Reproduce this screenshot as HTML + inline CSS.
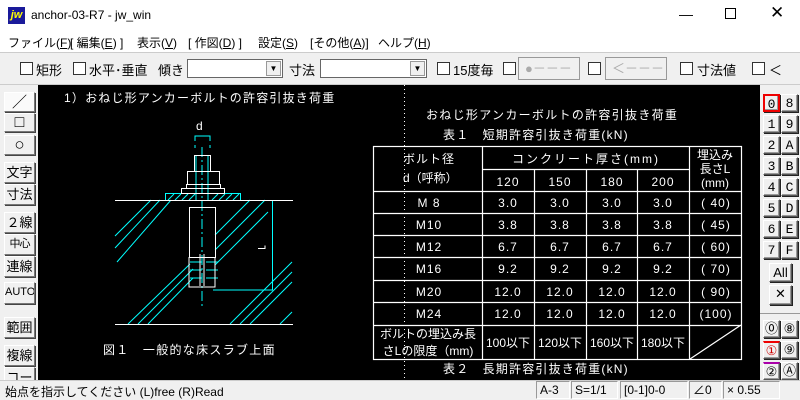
<!DOCTYPE html>
<html><head><meta charset="utf-8"><style>
*{margin:0;padding:0;box-sizing:border-box}
body{width:800px;height:400px;overflow:hidden;background:#f0f0f0;font-family:"Liberation Sans","Noto Sans CJK JP",sans-serif;position:relative;font-size:12px;color:#000}
.a{position:absolute;white-space:nowrap}
.cb{position:absolute;width:13px;height:13px;border:1px solid #333;background:#fff}
.btn{position:absolute;background:#f0f0f0;border:1px solid;border-color:#fff #777 #777 #fff;box-shadow:1px 1px 0 #444;text-align:center;font-size:13px;line-height:19px;overflow:hidden}
.rb{position:absolute;width:17px;height:18px;background:#f0f0f0;border:1px solid;border-color:#fff #555 #555 #fff;box-shadow:inset -1px -1px 0 #999,1px 1px 0 #222;text-align:center;font-size:13px;line-height:17px;font-family:"Liberation Mono",monospace}
.sp{position:absolute;top:381px;height:18px;border:1px solid;border-color:#999 #fff #fff #999;font-size:12px;line-height:16px;padding-left:3px}
</style></head><body>
<div class="a" style="left:0;top:0;width:800px;height:32px;background:#fff"></div>
<div class="a" style="left:8px;top:7px;width:17px;height:17px;background:#1a1a9a;color:#ff0;font-weight:bold;font-style:italic;font-size:11px;line-height:17px;text-align:center">jw</div>
<div class="a" style="left:31px;top:8px;font-size:12px">anchor-03-R7 - jw_win</div>
<div class="a" style="left:679px;top:6px;font-size:14px">—</div>
<div class="a" style="left:725px;top:8px;width:11px;height:11px;border:1.3px solid #000"></div>
<div class="a" style="left:770px;top:3px;font-size:17px">✕</div>
<div class="a" style="left:0;top:32px;width:800px;height:20px;background:#fff"></div>
<div class="a" style="left:8px;top:34px">ファイル(<u>F</u>)</div>
<div class="a" style="left:70px;top:34px">[ 編集(<u>E</u>) ]</div>
<div class="a" style="left:137px;top:34px">表示(<u>V</u>)</div>
<div class="a" style="left:188px;top:34px">[ 作図(<u>D</u>) ]</div>
<div class="a" style="left:258px;top:34px">設定(<u>S</u>)</div>
<div class="a" style="left:310px;top:34px">[その他(<u>A</u>)]</div>
<div class="a" style="left:378px;top:34px">ヘルプ(<u>H</u>)</div>
<div class="a" style="left:0;top:52px;width:800px;height:1px;background:#ccc"></div>
<div class="cb" style="left:20px;top:62px"></div><div class="a" style="left:36px;top:60px;font-size:13px">矩形</div>
<div class="cb" style="left:73px;top:62px"></div><div class="a" style="left:89px;top:60px;font-size:13px">水平･垂直</div>
<div class="a" style="left:158px;top:60px;font-size:13px">傾き</div>
<div class="a" style="left:187px;top:59px;width:96px;height:19px;background:#fff;border:1px solid #666"></div>
<div class="a" style="left:266px;top:61px;width:15px;height:15px;background:#f0f0f0;border:1px solid #999;font-size:8px;text-align:center;line-height:14px">▼</div>
<div class="a" style="left:289px;top:60px;font-size:13px">寸法</div>
<div class="a" style="left:320px;top:59px;width:107px;height:19px;background:#fff;border:1px solid #666"></div>
<div class="a" style="left:410px;top:61px;width:15px;height:15px;background:#f0f0f0;border:1px solid #999;font-size:8px;text-align:center;line-height:14px">▼</div>
<div class="cb" style="left:437px;top:62px"></div><div class="a" style="left:453px;top:60px;font-size:13px">15度毎</div>
<div class="cb" style="left:503px;top:62px"></div>
<div class="a" style="left:518px;top:57px;width:62px;height:23px;border:1px solid #999;color:#aaa;font-size:13px;line-height:21px;padding-left:6px">●－－－</div>
<div class="cb" style="left:588px;top:62px"></div>
<div class="a" style="left:605px;top:57px;width:62px;height:23px;border:1px solid #999;color:#aaa;font-size:13px;line-height:21px;padding-left:6px">＜－－－</div>
<div class="cb" style="left:680px;top:62px"></div><div class="a" style="left:697px;top:60px;font-size:13px">寸法値</div>
<div class="cb" style="left:752px;top:62px"></div><div class="a" style="left:769px;top:60px;font-size:13px">＜</div>
<div class="a" style="left:0;top:84px;width:800px;height:1px;background:#ccc"></div>

<div class="btn" style="left:4px;top:92px;width:31px;height:20px;background:#fafafa;font-size:15px">／</div>
<div class="btn" style="left:4px;top:113px;width:31px;height:19px;font-size:16px;line-height:17px">□</div>
<div class="btn" style="left:4px;top:135px;width:31px;height:20px;font-size:17px;line-height:18px">○</div>
<div class="btn" style="left:4px;top:162px;width:31px;height:21px">文字</div>
<div class="btn" style="left:4px;top:184px;width:31px;height:21px">寸法</div>
<div class="btn" style="left:4px;top:212px;width:31px;height:21px">２線</div>
<div class="btn" style="left:4px;top:234px;width:31px;height:21px;font-size:11px;letter-spacing:-1px">中心線</div>
<div class="btn" style="left:4px;top:256px;width:31px;height:21px">連線</div>
<div class="btn" style="left:4px;top:282px;width:31px;height:22px;font-size:11px">AUTO</div>
<div class="btn" style="left:4px;top:317px;width:31px;height:21px">範囲</div>
<div class="btn" style="left:4px;top:345px;width:31px;height:21px">複線</div>
<div class="btn" style="left:4px;top:367px;width:31px;height:14px">コーナー</div>

<svg class="a" style="left:38px;top:85px" width="722" height="296" viewBox="38 85 722 296">
<rect x="38" y="85" width="722" height="296" fill="#000"/>
<g fill="#fff" font-family="Liberation Sans,Noto Sans CJK JP,sans-serif" font-size="12">
<text x="64" y="102" letter-spacing="1.2">1）おねじ形アンカーボルトの許容引抜き荷重</text>
<text x="196" y="130" font-size="12">d</text>
<text x="103" y="354" letter-spacing="1.3">図１　一般的な床スラブ上面</text>
<text x="426" y="119" letter-spacing="1.3">おねじ形アンカーボルトの許容引抜き荷重</text>
<text x="443" y="139" letter-spacing="1.2">表１　短期許容引抜き荷重(kN)</text>
<text x="443" y="373" letter-spacing="1.2">表２　長期許容引抜き荷重(kN)</text>
</g>
<line x1="404.5" y1="85" x2="404.5" y2="381" stroke="#fff" stroke-dasharray="1,3"/>
<g stroke="#0ff" stroke-width="1" fill="none">
<path d="M195 141v-5h15v5M195 145v3M210 145v3"/>
<path d="M202 147v161" stroke-dasharray="10,3,2,3"/>
<rect x="165.5" y="193.5" width="75" height="7"/>
<path d="M168 200l6-6M175 200l6-6M182 200l6-6M189 200l6-6M212 200l6-6M219 200l6-6M226 200l6-6M233 200l6-6"/>
<path d="M196 155v45M208 155v45"/>
<path d="M272.5 200v90H213" />
<path d="M115 236l36-36M115 248l45-48M117 262l54-62M128 324l62-60M138 324l55-55M148 324l45-46M215 250l50-50M215 235l35-35M215 265l53-53M230 324l62-62M240 324l52-52M250 324l42-42M280 324l12-12"/>
<path d="M190 262h12M190 270h12M190 278h12M206 262h12M206 270h12M206 278h12"/>
</g>
<g stroke="#fff" stroke-width="1" fill="none">
<path d="M115 200.5h178M115 324.5h178"/>
<rect x="194.5" y="155.5" width="16" height="16"/>
<rect x="187.5" y="171.5" width="32" height="13"/>
<rect x="186.5" y="184.5" width="34" height="4"/>
<rect x="181.5" y="188.5" width="43" height="5"/>
<rect x="189.5" y="207.5" width="26" height="50"/>
<path d="M189 257v30h26v-30M200 254v32M204 254v32"/>
<path d="M258 248.5h7v-3"/>
</g>
<g stroke="#fff" stroke-width="1.2" fill="none">
<rect x="373.5" y="146.5" width="368" height="213"/>
<path d="M482.5 146v213M534.5 169v190M586.5 169v190M637.5 169v190M689.5 146v213M482 169.5h207M373 191.5h368M373 213.5h368M373 235.5h368M373 257.5h368M373 280.5h368M373 302.5h368M373 325.5h368M690 359l51-34"/>
</g>
<g fill="#fff" font-family="Liberation Sans,Noto Sans CJK JP,sans-serif" font-size="12" text-anchor="middle">
<text x="403" y="163" text-anchor="start" letter-spacing="1">ボルト径</text>
<text x="403" y="182" text-anchor="start">d（呼称）</text>
<text x="586" y="163" letter-spacing="2">コンクリート厚さ(mm)</text>
<text x="715" y="159">埋込み</text>
<text x="715" y="173">長さL</text>
<text x="715" y="187">(mm)</text>
<g letter-spacing="1">
<text x="508" y="186">120</text><text x="560" y="186">150</text><text x="612" y="186">180</text><text x="663" y="186">200</text>
<text x="429" y="207">M 8</text><text x="429" y="229">M10</text><text x="429" y="251">M12</text><text x="429" y="273">M16</text><text x="429" y="296">M20</text><text x="429" y="318">M24</text>
<text x="508" y="207">3.0</text><text x="560" y="207">3.0</text><text x="612" y="207">3.0</text><text x="663" y="207">3.0</text><text x="716" y="207">( 40)</text>
<text x="508" y="229">3.8</text><text x="560" y="229">3.8</text><text x="612" y="229">3.8</text><text x="663" y="229">3.8</text><text x="716" y="229">( 45)</text>
<text x="508" y="251">6.7</text><text x="560" y="251">6.7</text><text x="612" y="251">6.7</text><text x="663" y="251">6.7</text><text x="716" y="251">( 60)</text>
<text x="508" y="273">9.2</text><text x="560" y="273">9.2</text><text x="612" y="273">9.2</text><text x="663" y="273">9.2</text><text x="716" y="273">( 70)</text>
<text x="508" y="296">12.0</text><text x="560" y="296">12.0</text><text x="612" y="296">12.0</text><text x="663" y="296">12.0</text><text x="716" y="296">( 90)</text>
<text x="508" y="318">12.0</text><text x="560" y="318">12.0</text><text x="612" y="318">12.0</text><text x="663" y="318">12.0</text><text x="716" y="318">(100)</text>
</g>
<text x="428" y="338">ボルトの埋込み長</text>
<text x="428" y="355">さLの限度（mm)</text>
<text x="508" y="347">100以下</text><text x="560" y="347">120以下</text><text x="612" y="347">160以下</text><text x="663" y="347">180以下</text>
</g>
</svg>

<div class="rb" style="left:763px;top:94px;border:2px solid #e00">0</div><div class="rb" style="left:781px;top:94px">8</div>
<div class="rb" style="left:763px;top:115px">1</div><div class="rb" style="left:781px;top:115px">9</div>
<div class="rb" style="left:763px;top:136px">2</div><div class="rb" style="left:781px;top:136px">A</div>
<div class="rb" style="left:763px;top:157px">3</div><div class="rb" style="left:781px;top:157px">B</div>
<div class="rb" style="left:763px;top:178px">4</div><div class="rb" style="left:781px;top:178px">C</div>
<div class="rb" style="left:763px;top:199px">5</div><div class="rb" style="left:781px;top:199px">D</div>
<div class="rb" style="left:763px;top:220px">6</div><div class="rb" style="left:781px;top:220px">E</div>
<div class="rb" style="left:763px;top:241px">7</div><div class="rb" style="left:781px;top:241px">F</div>
<div class="rb" style="left:769px;top:263px;width:23px;height:19px;font-family:'Liberation Sans',sans-serif">All</div>
<div class="rb" style="left:769px;top:285px;width:23px;height:20px;font-size:16px">✕</div>
<div class="a" style="left:760px;top:313px;width:40px;height:1px;background:#999"></div>
<div class="rb" style="left:763px;top:320px">⓪</div><div class="rb" style="left:781px;top:320px">⑧</div>
<div class="rb" style="left:763px;top:341px;color:#c00;border-top:2px solid #e00">①</div><div class="rb" style="left:781px;top:341px">⑨</div>
<div class="rb" style="left:763px;top:362px;border-top:2px solid #a0a">②</div><div class="rb" style="left:781px;top:362px">Ⓐ</div>

<div class="a" style="left:0;top:380px;width:800px;height:20px;background:#f0f0f0;border-top:1px solid #ccc"></div>
<div class="a" style="left:5px;top:383px;font-size:12px">始点を指示してください (L)free (R)Read</div>
<div class="sp" style="left:536px;width:34px">A-3</div>
<div class="sp" style="left:571px;width:47px">S=1/1</div>
<div class="sp" style="left:620px;width:68px">[0-1]0-0</div>
<div class="sp" style="left:689px;width:33px">∠0</div>
<div class="sp" style="left:723px;width:57px">× 0.55</div>
</body></html>
